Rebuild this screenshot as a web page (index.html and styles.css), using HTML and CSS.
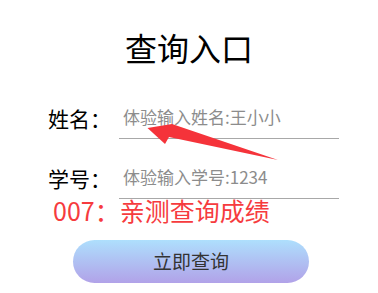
FILE: index.html
```html
<!DOCTYPE html>
<html lang="zh">
<head>
<meta charset="utf-8">
<link rel="stylesheet" href="styles.css">
</head>
<body>
<div class="page">
  <h1 class="title">查询入口</h1>
  <div class="row row-first">
    <label class="label">姓名：</label>
    <input class="field" type="text" placeholder="体验输入姓名:王小小">
  </div>
  <div class="row row-second">
    <label class="label">学号：</label>
    <input class="field" type="text" placeholder="体验输入学号:1234">
  </div>
  <div class="note">007：亲测查询成绩</div>
  <button class="btn">立即查询</button>
  <svg class="arrow" width="378" height="293" viewBox="0 0 378 293">
    <polygon points="147.5,128 172,124 278,160 169,137 165,144" fill="#f5333a"/>
  </svg>
</div>
</body>
</html>
```

FILE: styles.css
```css
html, body {
  margin: 0;
  padding: 0;
  background: #fff;
}
body {
  font-family: "Noto Sans CJK SC", "Noto Sans", sans-serif;
  color: #000;
}
.page {
  position: relative;
  width: 378px;
  height: 293px;
  overflow: hidden;
}
.title {
  margin: 27px 0 0;
  font-size: 32px;
  line-height: 40px;
  font-weight: normal;
  text-align: center;
}
.row {
  display: flex;
  align-items: center;
  padding-left: 48px;
}
.row-first {
  margin-top: 32px;
}
.row-second {
  margin-top: 20px;
}
.label {
  width: 71px;
  font-size: 21px;
  line-height: 26px;
  padding-bottom: 3px;
}
.field {
  width: 220px;
  height: 40px;
  box-sizing: border-box;
  border: none;
  border-bottom: 1px solid #a8a8a8;
  padding: 0 4px 4px;
  margin: 0;
  font-family: inherit;
  font-size: 17px;
  outline: none;
  background: transparent;
}
.field::placeholder {
  color: #8c8c8c;
}
.note {
  padding-left: 53px;
  font-size: 25px;
  line-height: 22px;
  color: #f63b3e;
}
.btn {
  display: block;
  margin: 19px 0 0 73px;
  width: 236px;
  height: 43px;
  border: none;
  border-radius: 22px;
  background: linear-gradient(#aedffd, #b1a2e8);
  font-family: inherit;
  font-size: 19px;
  color: #333;
  padding: 0 0 3px;
}
.arrow {
  position: absolute;
  left: 0;
  top: 0;
  pointer-events: none;
}
```
